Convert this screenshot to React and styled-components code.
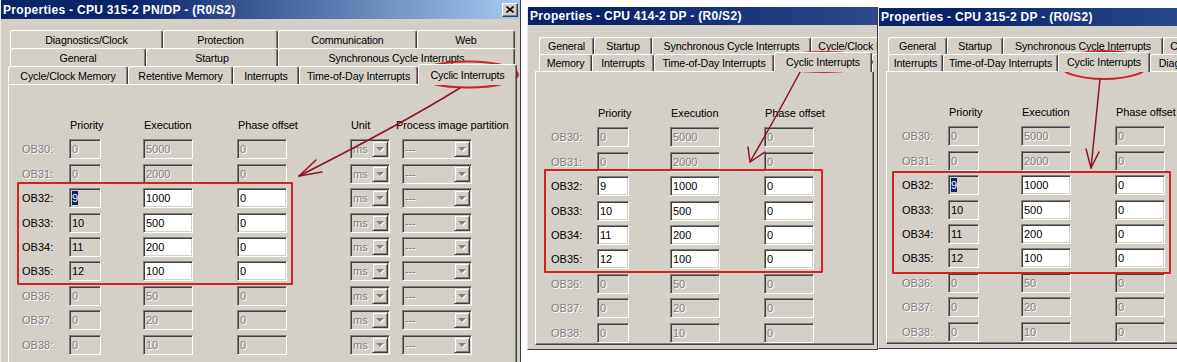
import React from 'react';
import styled, { createGlobalStyle, css } from 'styled-components';

const GlobalStyle = createGlobalStyle`
  html, body { margin: 0; padding: 0; background: #fff; }
  body { font-family: "Liberation Sans", Arial, sans-serif; font-size: 11px; color: #000; }
`;

const Canvas = styled.div`
  position: relative;
  width: 1177px;
  height: 362px;
  overflow: hidden;
  display: flex;
  align-items: flex-start;
  background: #fff;
`;

const Window = styled.div`
  flex: none;
  box-sizing: border-box;
  width: ${({ $width }) => $width}px;
  height: ${({ $height }) => $height}px;
  margin-top: ${({ $top }) => $top}px;
  margin-left: ${({ $left }) => $left || 0}px;
  background: #d4d0c8;
  border-left: 1px solid #ecebe6;
  border-right: 1px solid #404040;
  border-bottom: 1px solid #404040;
  display: flex;
  flex-direction: column;
  overflow: hidden;
`;

const TitleBar = styled.div`
  flex: none;
  height: ${({ $h }) => $h}px;
  display: flex;
  align-items: center;
  justify-content: space-between;
  padding: 0 2px 0 2px;
  background: linear-gradient(90deg, #0a246a 0%, #0a246a 25%, ${({ $end }) => $end} 100%);
  color: #fff;
  font: bold 12px "Liberation Sans", Arial, sans-serif;
  letter-spacing: 0.3px;
  white-space: nowrap;
`;

const CloseButton = styled.div`
  box-sizing: border-box;
  width: 16px;
  height: 14px;
  display: flex;
  align-items: center;
  justify-content: center;
  background: #d4d0c8;
  border-style: solid;
  border-width: 1px;
  border-color: #fff #404040 #404040 #fff;
  box-shadow: inset -1px -1px 0 #808080;
`;

const TabStrip = styled.div`
  flex: none;
  margin-top: ${({ $gap }) => $gap}px;
  display: flex;
  flex-direction: column;
`;

const TabRow = styled.div`
  display: flex;
  height: ${({ $h }) => $h}px;
  padding-left: ${({ $pad }) => $pad}px;
`;

const Tab = styled.div`
  flex: none;
  box-sizing: border-box;
  width: ${({ $w }) => $w}px;
  height: 100%;
  border-top: 1px solid #fff;
  border-left: 1px solid #fff;
  border-right: 1px solid #404040;
  box-shadow: inset -1px 0 0 #808080;
  border-radius: 3px 3px 0 0;
  background: #d4d0c8;
  display: flex;
  align-items: center;
  justify-content: center;
  font-size: 10.7px;
  letter-spacing: -0.15px;
  white-space: nowrap;
  overflow: hidden;
  ${({ $active }) => $active && css`
    position: relative;
    z-index: 1;
    height: calc(100% + 3px);
    margin-top: -2px;
    padding-bottom: 1px;
  `}
`;

const Page = styled.div`
  flex: 1;
  margin: 0 ${({ $mr }) => $mr}px ${({ $mb }) => $mb}px ${({ $ml }) => $ml}px;
  border-top: 1px solid #fff;
  border-left: 1px solid #fff;
  border-right: 1px solid #404040;
  border-bottom: 1px solid #404040;
  box-shadow: inset -1px -1px 0 #808080;
  padding: ${({ $pt }) => $pt}px 0 0 ${({ $pl }) => $pl}px;
`;

const Grid = styled.div`
  display: grid;
  grid-template-columns: ${({ $cols }) => $cols};
  grid-auto-rows: 20px;
  row-gap: 4.4px;
  align-items: center;
`;

const Head = styled.span`
  white-space: nowrap;
  padding-left: 1px;
  letter-spacing: -0.1px;
  margin-left: ${({ $shift }) => $shift || 0}px;
`;

const ObLabel = styled.span`
  white-space: nowrap;
  color: ${({ $off }) => ($off ? '#808080' : '#000')};
  text-shadow: ${({ $off }) => ($off ? '1px 1px 0 #fff' : 'none')};
`;

const Field = styled.div`
  box-sizing: border-box;
  width: ${({ $w }) => $w}px;
  height: 20px;
  padding-left: 2px;
  line-height: 18px;
  border-style: solid;
  border-width: 1px;
  border-color: #808080 #fff #fff #808080;
  box-shadow: inset 1px 1px 0 #404040, inset -1px -1px 0 #d4d0c8;
  background: ${({ $kind }) => ($kind === 'on' ? '#fff' : '#d4d0c8')};
  color: ${({ $kind }) => ($kind === 'off' ? '#808080' : '#000')};
  text-shadow: ${({ $kind }) => ($kind === 'off' ? '1px 1px 0 #fff' : 'none')};
  white-space: nowrap;
  overflow: hidden;
`;

const Selected = styled.span`
  background: #0a246a;
  color: #fff;
  padding: 1px 0;
`;

const Combo = styled(Field)`
  display: flex;
  align-items: center;
  justify-content: space-between;
  padding: 0 1px 0 2px;
`;

const DropButton = styled.div`
  box-sizing: border-box;
  width: 16px;
  height: 16px;
  display: flex;
  align-items: center;
  justify-content: center;
  background: #d4d0c8;
  border-style: solid;
  border-width: 1px;
  border-color: #d4d0c8 #404040 #404040 #d4d0c8;
  box-shadow: inset 1px 1px 0 #fff, inset -1px -1px 0 #808080;

  &::after {
    content: '';
    border-left: 4px solid transparent;
    border-right: 4px solid transparent;
    border-top: 4px solid #808080;
    filter: drop-shadow(1px 1px 0 #fff);
  }
`;

const Overlay = styled.svg`
  position: absolute;
  left: 0;
  top: 0;
  pointer-events: none;
`;

const ROWS = [
  { ob: 'OB30', p: '0', e: '5000', off: true },
  { ob: 'OB31', p: '0', e: '2000', off: true },
  { ob: 'OB32', p: '9', e: '1000', sel: true },
  { ob: 'OB33', p: '10', e: '500' },
  { ob: 'OB34', p: '11', e: '200' },
  { ob: 'OB35', p: '12', e: '100' },
  { ob: 'OB36', p: '0', e: '50', off: true },
  { ob: 'OB37', p: '0', e: '20', off: true },
  { ob: 'OB38', p: '0', e: '10', off: true },
];

const DIALOGS = [
  {
    title: 'Properties - CPU 315-2 PN/DP - (R0/S2)',
    width: 521, height: 372, top: 0, left: 0, titleH: 19, end: '#a6caf0', close: true,
    gap: 11, rowH: 18,
    tabs: [
      { pad: 9, items: [['Diagnostics/Clock', 153], ['Protection', 115], ['Communication', 139], ['Web', 98]] },
      { pad: 9, items: [['General', 136], ['Startup', 132], ['Synchronous Cycle Interrupts', 237]] },
      { pad: 7, items: [['Cycle/Clock Memory', 120], ['Retentive Memory', 105], ['Interrupts', 66], ['Time-of-Day Interrupts', 119], ['Cyclic Interrupts', 99, true]] },
    ],
    page: { ml: 7, mr: 3, mb: 0, pt: 30, pl: 13 },
    cols: '47px 74px 94px 113px 52px 80px',
    prioKind: 'ro', priorityW: 32, units: true,
  },
  {
    title: 'Properties - CPU 414-2 DP - (R0/S2)',
    width: 351, height: 343, top: 7, left: 6, titleH: 18, end: '#2c4a8c',
    gap: 12, rowH: 17,
    tabs: [
      { pad: 11, items: [['General', 55], ['Startup', 58], ['Synchronous Cycle Interrupts', 159], ['Cycle/Clock Memory', 110]] },
      { pad: 11, items: [['Memory', 53], ['Interrupts', 62], ['Time-of-Day Interrupts', 120], ['Cyclic Interrupts', 98, true], ['Diagnostics/Clock', 100]] },
    ],
    page: { ml: 7, mr: 3, mb: 4, pt: 31, pl: 15 },
    cols: '46px 73px 94px 60px',
    prioKind: 'on', priorityW: 32,
  },
  {
    title: 'Properties - CPU 315-2 DP - (R0/S2)',
    width: 310, height: 341, top: 8, left: 0, titleH: 18, end: '#2a4a8e',
    gap: 11, rowH: 17,
    tabs: [
      { pad: 9, items: [['General', 59], ['Startup', 56], ['Synchronous Cycle Interrupts', 160], ['Cycle/Clock Memory', 110]] },
      { pad: 9, items: [['Interrupts', 55], ['Time-of-Day Interrupts', 115], ['Cyclic Interrupts', 92, true], ['Diagnostics/Clock', 100]] },
    ],
    page: { ml: 7, mr: 3, mb: 4, pt: 30, pl: 15 },
    cols: '46px 73px 94px 60px',
    prioKind: 'ro', priorityW: 31,
  },
];

function Dialog({ d }) {
  return (
    <Window $width={d.width} $height={d.height} $top={d.top} $left={d.left}>
      <TitleBar $h={d.titleH} $end={d.end}>
        <span>{d.title}</span>
        {d.close && (
          <CloseButton>
            <svg width="8" height="7" viewBox="0 0 8 7">
              <path d="M0.5 0.5 L7.5 6.5 M7.5 0.5 L0.5 6.5" stroke="#000" strokeWidth="1.6" />
            </svg>
          </CloseButton>
        )}
      </TitleBar>
      <TabStrip $gap={d.gap}>
        {d.tabs.map((row, i) => (
          <TabRow key={i} $h={d.rowH} $pad={row.pad}>
            {row.items.map(([label, w, active]) => (
              <Tab key={label} $w={w} $active={active}>{label}</Tab>
            ))}
          </TabRow>
        ))}
      </TabStrip>
      <Page $ml={d.page.ml} $mr={d.page.mr} $mb={d.page.mb} $pt={d.page.pt} $pl={d.page.pl}>
        <Grid $cols={d.cols}>
          <span />
          <Head>Priority</Head>
          <Head>Execution</Head>
          <Head>Phase offset</Head>
          {d.units && <Head>Unit</Head>}
          {d.units && <Head $shift={-7}>Process image partition</Head>}
          {ROWS.map((r) => (
            <React.Fragment key={r.ob}>
              <ObLabel $off={r.off}>{r.ob}:</ObLabel>
              <Field $w={d.priorityW} $kind={r.off ? 'off' : d.prioKind}>
                {r.sel && d.prioKind === 'ro' ? <Selected>{r.p}</Selected> : r.p}
              </Field>
              <Field $w={50} $kind={r.off ? 'off' : 'on'}>{r.e}</Field>
              <Field $w={50} $kind={r.off ? 'off' : 'on'}>0</Field>
              {d.units && (
                <Combo $w={40} $kind="off">ms<DropButton /></Combo>
              )}
              {d.units && (
                <Combo $w={70} $kind="off">---<DropButton /></Combo>
              )}
            </React.Fragment>
          ))}
        </Grid>
      </Page>
    </Window>
  );
}

function Annotations() {
  const ring = '#cc2328';
  const box = '#d42222';
  const arrow = '#8a1620';
  return (
    <Overlay width="1177" height="362" viewBox="0 0 1177 362">
      <g fill="none" strokeLinecap="round" strokeLinejoin="round">
        <ellipse cx="468" cy="74.5" rx="50" ry="13" stroke={ring} strokeWidth="2" />
        <path d="M460 88 Q400 125 299 176" stroke={arrow} strokeWidth="1.5" />
        <path d="M316 160 L299 176 L322 172" stroke={arrow} strokeWidth="1.5" />
        <rect x="18" y="183" width="274" height="101" stroke={box} strokeWidth="2" />

        <ellipse cx="823" cy="62" rx="49" ry="10" stroke={ring} strokeWidth="2" />
        <path d="M800 72 Q780 110 750 162" stroke={arrow} strokeWidth="1.5" />
        <path d="M748 147 L750 162 L765 152" stroke={arrow} strokeWidth="1.5" />
        <rect x="545" y="170" width="277" height="102" stroke={box} strokeWidth="2" />

        <ellipse cx="1104" cy="65" rx="44" ry="14" stroke={ring} strokeWidth="2" />
        <path d="M1100 79 L1091 168" stroke={arrow} strokeWidth="1.5" />
        <path d="M1086 149 L1091 168 L1099 152" stroke={arrow} strokeWidth="1.5" />
        <rect x="893" y="172" width="277" height="101" stroke={box} strokeWidth="2" />
      </g>
    </Overlay>
  );
}

export default function App() {
  return (
    <>
      <GlobalStyle />
      <Canvas>
        {DIALOGS.map((d) => (
          <Dialog key={d.title} d={d} />
        ))}
        <Annotations />
      </Canvas>
    </>
  );
}
